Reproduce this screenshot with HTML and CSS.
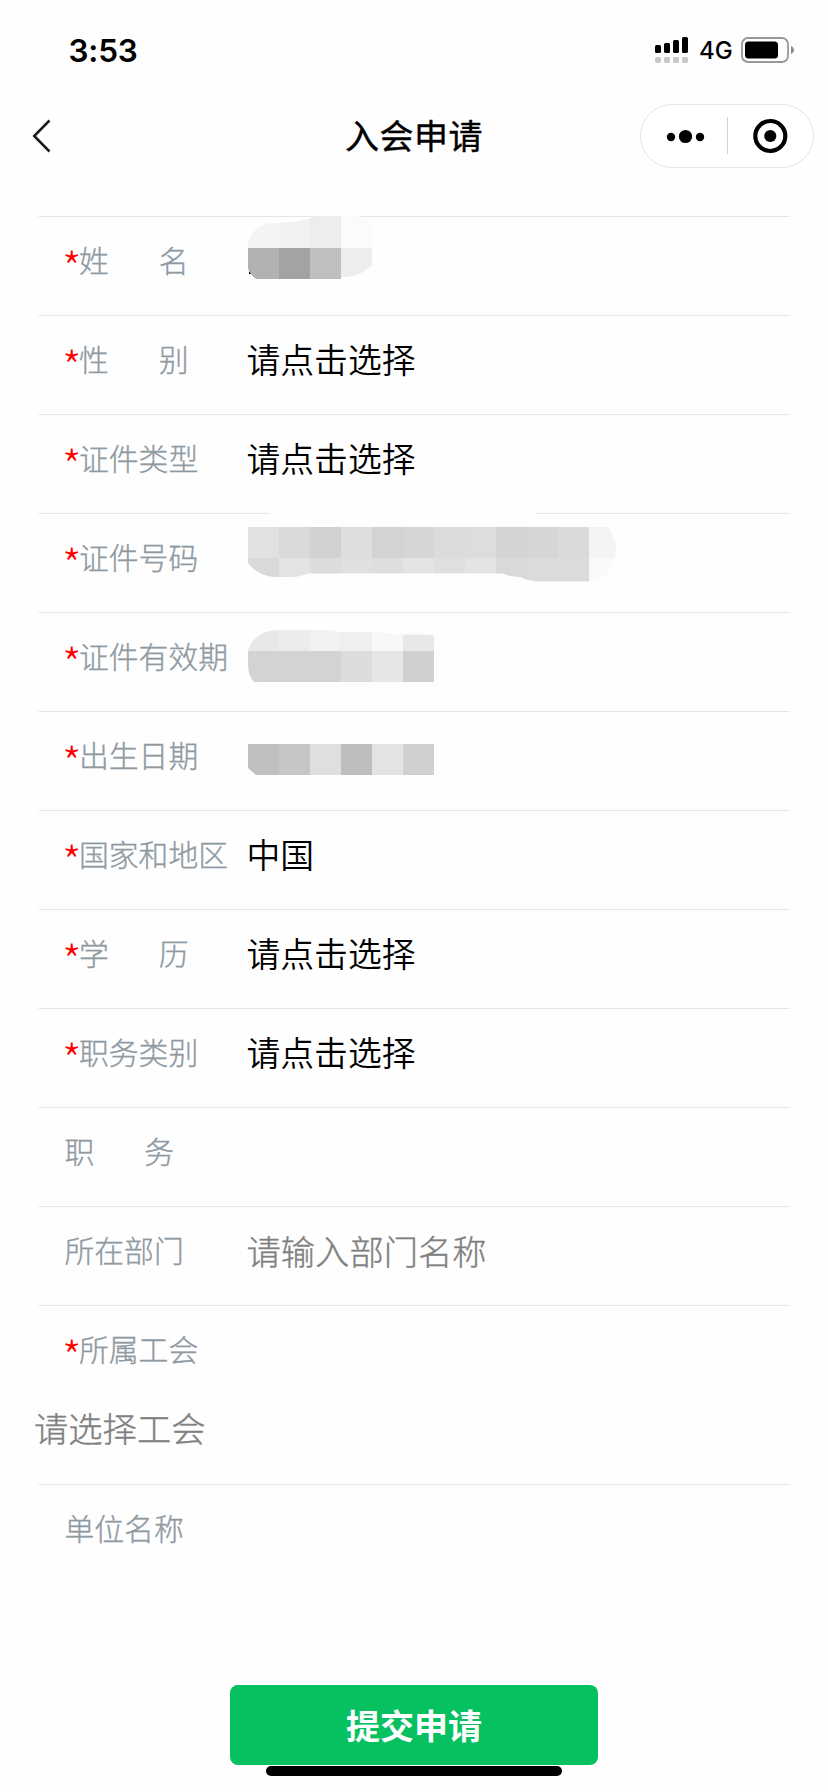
FILE: index.html
```html
<!DOCTYPE html>
<html lang="zh-CN">
<head>
<meta charset="utf-8">
<title>入会申请</title>
<link rel="stylesheet" href="styles.css">
</head>
<body>
<header class="status">
  <span class="time">3:53</span>
  <div class="status-right">
    <svg class="signal" width="34" height="28" viewBox="0 0 34 28">
      <g fill="#000"><rect x="0" y="9" width="6" height="8" rx="1.5"/><rect x="9" y="7" width="6" height="10" rx="1.5"/><rect x="18" y="4" width="6" height="13" rx="1.5"/><rect x="27" y="1" width="6" height="16" rx="1.5"/></g>
      <g fill="#c8c8c8"><rect x="0" y="21" width="6" height="6" rx="1.5"/><rect x="9" y="21" width="6" height="6" rx="1.5"/><rect x="18" y="21" width="6" height="6" rx="1.5"/><rect x="27" y="21" width="6" height="6" rx="1.5"/></g>
    </svg>
    <span class="network">4G</span>
    <svg class="battery" width="54" height="26" viewBox="0 0 54 26">
      <rect x="1" y="1" width="46" height="24" rx="6" fill="none" stroke="#999" stroke-width="1.8"/>
      <rect x="4" y="4.5" width="33" height="17" rx="3.5"/>
      <path d="M50 9c4 1.500 4 6.500 0 8z" fill="#8c8c8c"/>
    </svg>
  </div>
</header>
<nav class="nav">
  <svg class="back" width="20" height="36" viewBox="0 0 20 36"><path d="M17.500 2.500 2.200 18l15.300 15.500" fill="none" stroke="#1a1a1a" stroke-width="2.500"/></svg>
  <h1 class="title">入会申请</h1>
  <div class="capsule">
    <svg width="174" height="64" viewBox="0 0 174 64">
      <rect x=".5" y=".5" width="173" height="63" rx="31.500" fill="#fff" stroke="#e5e5e5"/>
      <circle cx="31" cy="33" r="4.200"/><circle cx="45.500" cy="32.500" r="6.600"/><circle cx="60" cy="33" r="4.200"/>
      <path d="M87.500 13v37" stroke="#d0d0d0"/>
      <circle cx="130.300" cy="32" r="15" fill="none" stroke="#000" stroke-width="4.200"/><circle cx="130.300" cy="32" r="6.100"/>
    </svg>
  </div>
</nav>
<main class="form">
  <div class="row">
    <div class="label"><i class="req">*</i>姓<span class="gap"></span>名</div>
    <svg class="mask" width="380" height="98" viewBox="247 217 380 98">
      <clipPath id="name"><path d="M248 243C251 229 263 223 274 223C292 223 303 221 316 216H358C365 218 370 221 372 223V265C362 275 353 277 341 277V279H256C252 276 250 273 248 269Z"/></clipPath>
      <path d="M249 271l3 3h-3z"/>
      <g clip-path="url(#name)">
        <path fill="#f4f4f4" d="M248 216h31v32h-31z"/><path fill="#f1f1f1" d="M279 216h31v32h-31z"/><path fill="#ededed" d="M310 216h31v32h-31z"/><path fill="#fbfbfb" d="M341 216h31v32h-31z"/>
        <path fill="#b1b1b1" d="M248 248h31v31h-31z"/><path fill="#a3a3a3" d="M279 248h31v31h-31z"/><path fill="#bfbfbf" d="M310 248h31v31h-31z"/><path fill="#ededed" d="M341 248h31v31h-31z"/>
      </g>
    </svg>
  </div>
  <div class="row"><div class="label"><i class="req">*</i>性<span class="gap"></span>别</div><div class="value">请点击选择</div></div>
  <div class="row"><div class="label"><i class="req">*</i>证件类型</div><div class="value">请点击选择</div></div>
  <div class="row">
    <div class="label"><i class="req">*</i>证件号码</div>
    <svg class="mask" width="380" height="98" viewBox="247 514 380 98">
      <clipPath id="number"><path d="M248 527H607C613 533 616 541 616 550C616 566 605 581 588 581.500H536C530 581 525 579 520 577C514 577 508 576 504 573.500H308C302 576 297 577 290 577H275C262 576 253 570 248 563Z"/></clipPath>
      <path fill="#fefefe" d="M269 513h266v2H269z"/>
      <g clip-path="url(#number)">
        <path fill="#e1e1e1" d="M248 527h31v31h-31z"/><path fill="#d9d9d9" d="M279 527h31v31h-31z"/><path fill="#d1d1d1" d="M310 527h31v31h-31z"/><path fill="#dedede" d="M341 527h31v31h-31z"/><path fill="#d3d3d3" d="M372 527h31v31h-31z"/><path fill="#d6d6d6" d="M403 527h31v31h-31z"/><path fill="#dcdcdc" d="M434 527h31v31h-31z"/><path fill="#dddddd" d="M465 527h31v31h-31z"/><path fill="#d4d4d4" d="M496 527h31v31h-31z"/><path fill="#d6d6d6" d="M527 527h31v31h-31z"/><path fill="#dadada" d="M558 527h31v31h-31z"/><path fill="#f4f4f4" d="M589 527h31v31h-31z"/>
        <path fill="#d9d9d9" d="M248 558h31v31h-31z"/><path fill="#e3e3e3" d="M279 558h31v31h-31z"/><path fill="#dcdcdc" d="M310 558h31v31h-31z"/><path fill="#e0e0e0" d="M341 558h31v31h-31z"/><path fill="#dedede" d="M372 558h31v31h-31z"/><path fill="#e3e3e3" d="M403 558h31v31h-31z"/><path fill="#dfdfdf" d="M434 558h31v31h-31z"/><path fill="#e4e4e4" d="M465 558h31v31h-31z"/><path fill="#d9d9d9" d="M496 558h31v31h-31z"/><path fill="#dbdbdb" d="M527 558h62v31h-62z"/><path fill="#fafafa" d="M589 558h31v31h-31z"/>
      </g>
    </svg>
  </div>
  <div class="row">
    <div class="label"><i class="req">*</i>证件有效期</div>
    <svg class="mask" width="380" height="98" viewBox="247 613 380 98">
      <clipPath id="expiry"><path d="M248 651C251 638 263 630 279 630H325C333 630 337 632 342 632H377C385 632 390 634.500 396 634.500H424C429 634.500 432 635 434 636V682H254C250 677 248 672 248 664Z"/></clipPath>
      <path fill="#fdfdfd" d="M434 651h28q3 0 3 3v28q-5 18-32 18-18 0-34-3-49-5-90-3-37 2-55-12h180z"/>
      <g clip-path="url(#expiry)">
        <path fill="#e8e8e8" d="M248 629h31v22h-31z"/><path fill="#ececec" d="M279 629h31v22h-31z"/><path fill="#f2f2f2" d="M310 629h31v22h-31z"/><path fill="#efefef" d="M341 629h31v22h-31z"/><path fill="#f7f7f7" d="M372 629h31v22h-31z"/><path fill="#e8e8e8" d="M403 629h31v22h-31z"/>
        <path fill="#d3d3d3" d="M248 651h93v31h-93z"/><path fill="#dcdcdc" d="M341 651h31v31h-31z"/><path fill="#e6e6e6" d="M372 651h31v31h-31z"/><path fill="#d0d0d0" d="M403 651h31v31h-31z"/>
      </g>
    </svg>
  </div>
  <div class="row">
    <div class="label"><i class="req">*</i>出生日期</div>
    <svg class="mask" width="380" height="98" viewBox="247 712 380 98">
      <path fill="#fdfdfd" d="M248 744v-14q9-13 31-14v28zM341 716h31v28h-31zM403 716h26l5 2v26h-31z"/>
      <path fill="#c0c0c0" d="M248 744h31v31h-23l-8-7z"/><path fill="#c6c6c6" d="M279 744h31v31h-31z"/><path fill="#dfdfdf" d="M310 744h31v31h-31z"/><path fill="#bebebe" d="M341 744h31v31h-31z"/><path fill="#e3e3e3" d="M372 744h31v31h-31z"/><path fill="#d0d0d0" d="M403 744h31v31h-31z"/>
    </svg>
  </div>
  <div class="row"><div class="label"><i class="req">*</i>国家和地区</div><div class="value">中国</div></div>
  <div class="row"><div class="label"><i class="req">*</i>学<span class="gap"></span>历</div><div class="value">请点击选择</div></div>
  <div class="row"><div class="label"><i class="req">*</i>职务类别</div><div class="value">请点击选择</div></div>
  <div class="row"><div class="label">职<span class="gap"></span>务</div></div>
  <div class="row"><div class="label">所在部门</div><div class="value placeholder">请输入部门名称</div></div>
  <div class="row row-tall"><div class="label"><i class="req">*</i>所属工会</div><div class="union placeholder">请选择工会</div></div>
  <div class="row"><div class="label">单位名称</div></div>
</main>
<footer class="footer">
  <button class="submit">提交申请</button>
  <div class="home"></div>
</footer>
</body>
</html>
```
FILE: styles.css
```css
* { box-sizing: border-box; }
body {
  margin: 0;
  width: 828px;
  height: 1792px;
  overflow: hidden;
  display: flex;
  flex-direction: column;
  background: #fefefe;
  color: #000;
  font-family: "Noto Sans CJK SC", sans-serif;
}
.status {
  height: 100px;
  padding: 0 33px 0 68.5px;
  display: flex;
  justify-content: space-between;
  font-family: Inter, sans-serif;
}
.time { font-size: 31.5px; font-weight: 600; line-height: 101px; letter-spacing: -0.2px; }
.status-right { display: flex; }
.signal { margin-top: 36px; }
.network { width: 52px; padding-left: 10px; font-size: 24px; font-weight: 500; line-height: 102px; }
.battery { margin-top: 37px; }
.nav {
  height: 116px;
  padding: 0 14px 0 32px;
  display: grid;
  grid-template-columns: 174px 1fr 174px;
  align-items: start;
}
.back { margin-top: 18px; }
.title {
  margin: 0;
  padding-right: 18px;
  font-size: 34px;
  font-weight: 400;
  line-height: 69px;
  text-align: center;
  letter-spacing: 0.5px;
  -webkit-text-stroke: 0.4px #000;
}
.capsule { height: 64px; margin-top: 4px; }
.form { height: 1469px; }
.row {
  height: 99px;
  padding: 1px 0 0 65px;
  display: flex;
  background: linear-gradient(90deg, transparent, #e5e5e5 5px, #e5e5e5 751px, transparent) 36px 0 / 756px 1px no-repeat;
}
.label {
  flex: none;
  width: 182px;
  padding-right: 1px;
  margin-left: -0.5px;
  font-size: 29.8px;
  font-weight: 300;
  line-height: 84px;
  white-space: nowrap;
  color: #8f99a2;
  -webkit-text-stroke: 0.35px #8f99a2;
}
.req {
  display: inline-block;
  width: 14.500px;
  margin-left: -2.5px;
  margin-right: 2.5px;
  font-style: normal;
  font-size: 44px;
  line-height: 0;
  vertical-align: -13px;
  color: #f00;
  -webkit-text-stroke: 0;
}
.gap { display: inline-block; width: 50px; }
.value { font-size: 33.800px; font-weight: 350; line-height: 86px; }
.placeholder { color: #808080; font-size: 34.3px; font-weight: 300; -webkit-text-stroke: 0.35px #808080; }
.mask { margin-left: 0.5px; overflow: visible; }
.row-tall { height: 179px; flex-direction: column; }
.union { margin: -5px 0 0 -31px; line-height: 84px; }
.footer { display: flex; flex-direction: column; align-items: center; }
.submit {
  width: 368px;
  height: 80px;
  padding: 0;
  border: 0;
  border-radius: 8px;
  background: #07c160;
  color: #fff;
  font: bold 34px/76px "Noto Sans CJK SC", sans-serif;
}
.home { width: 296px; height: 10px; margin-top: 1px; border-radius: 5px; background: #000; }
```
